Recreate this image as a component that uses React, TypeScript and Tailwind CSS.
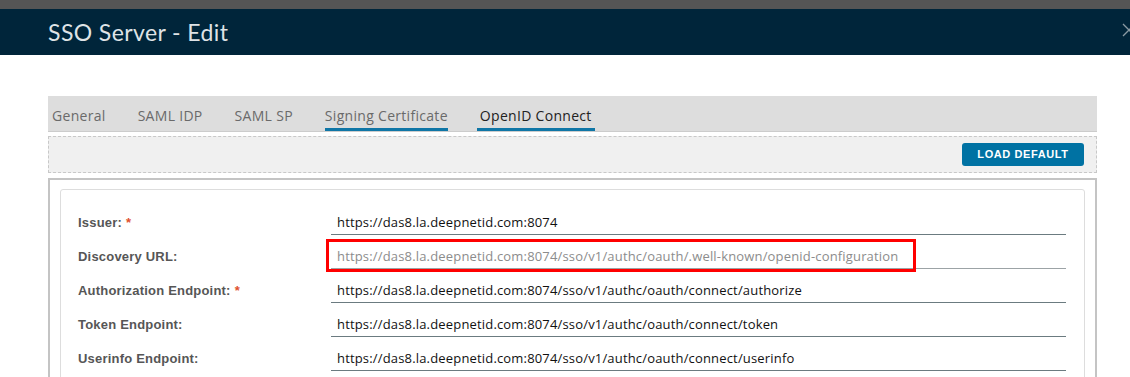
const TABS = [
  { name: 'General', underline: false, active: false },
  { name: 'SAML IDP', underline: false, active: false },
  { name: 'SAML SP', underline: false, active: false },
  { name: 'Signing Certificate', underline: true, active: false },
  { name: 'OpenID Connect', underline: true, active: true },
]

const ROWS = [
  { label: 'Issuer:', required: true, value: 'https://das8.la.deepnetid.com:8074', readonly: false },
  { label: 'Discovery URL:', required: false, value: 'https://das8.la.deepnetid.com:8074/sso/v1/authc/oauth/.well-known/openid-configuration', readonly: true },
  { label: 'Authorization Endpoint:', required: true, value: 'https://das8.la.deepnetid.com:8074/sso/v1/authc/oauth/connect/authorize', readonly: false },
  { label: 'Token Endpoint:', required: false, value: 'https://das8.la.deepnetid.com:8074/sso/v1/authc/oauth/connect/token', readonly: false },
  { label: 'Userinfo Endpoint:', required: false, value: 'https://das8.la.deepnetid.com:8074/sso/v1/authc/oauth/connect/userinfo', readonly: false },
]

export default function App() {
  return (
    <div className="w-[1130px] h-[377px] overflow-hidden bg-white font-['Liberation_Sans',sans-serif]">
      <div className="h-[9px] bg-[#555]" />
      <header className="relative h-[46px] bg-[#00253a] pl-12 flex items-center">
        <h1 className="text-[23px] text-[#dfe3e6] font-['Lato',sans-serif] tracking-[0.4px]">SSO Server - Edit</h1>
        <svg className="absolute left-[1122px] top-[14px]" width="14" height="14" viewBox="0 0 14 14">
          <path d="M1 1 L13 13 M13 1 L1 13" stroke="#8a9aa3" strokeWidth="1.3" fill="none" />
        </svg>
      </header>

      <div className="mt-[41px] ml-12 w-[1049px]">
        <div className="h-[36px] bg-[#ddd] border-b border-[#ccc] flex items-end pl-1 gap-8 font-['Open_Sans',sans-serif] tracking-[0.3px]">
          {TABS.map(t => (
            <div key={t.name}
              className={`h-[35px] flex items-center text-[14px] ${t.active ? 'text-[#222] px-[3px] -ml-[3px]' : 'text-[#6a6a6a]'} ${t.underline ? 'border-b-[3px] border-[#0f76a6] pt-[6px]' : 'pt-[4px]'}`}>
              {t.name}
            </div>
          ))}
        </div>

        <div className="mt-1 h-[37px] bg-[#f0f0f0] border border-dashed border-[#c8c8c8] flex items-center justify-end pr-3">
          <button className="w-[122px] h-[23px] rounded-[3px] bg-[#0072a3] text-white text-[11px] font-bold tracking-[0.6px]">
            LOAD DEFAULT
          </button>
        </div>

        <div className="mt-[5px] h-[220px] border-2 border-[#c4c4c4] pt-[9px] pl-[10px] pr-[10px]">
          <div className="h-full border border-[#ddd] rounded-[3px] pt-[16px] pl-[17px] pr-[18px]">
            {ROWS.map(r => (
              <div key={r.label} className="h-[34px] flex items-center">
                <div className="w-[253px] text-[13px] font-bold text-[#565656] tracking-[0.2px]">
                  {r.label}
                  {r.required && <span className="text-[#e0502e] ml-1">*</span>}
                </div>
                <div className="relative flex-1">
                  <div className={`h-[24px] flex items-center pl-[6px] text-[13px] tracking-[0.17px] font-['Open_Sans',sans-serif] border-b ${r.readonly ? 'text-[#8c8c8c] border-[#9ca3a6]' : 'text-[#111] border-[#6b7b80]'}`}>
                    {r.value}
                  </div>
                  {r.readonly && (
                    <div className="absolute -left-[5px] -top-[6px] w-[590px] h-[33px] border-[3px] border-[#ff0000]" />
                  )}
                </div>
              </div>
            ))}
          </div>
        </div>
      </div>
    </div>
  )
}
